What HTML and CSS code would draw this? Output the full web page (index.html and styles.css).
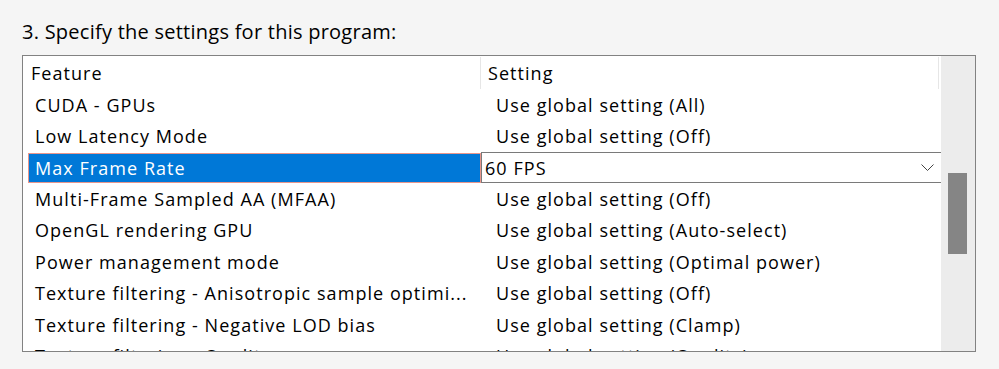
FILE: index.html
```html
<!DOCTYPE html>
<html lang="en">
<head>
  <meta charset="UTF-8">
  <title>Program Settings</title>
  <link rel="stylesheet" href="styles.css">
</head>
<body>

  <div class="page">
    <p class="step">3. Specify the settings for this program:</p>

    <div class="settings">
      <div class="grid">
        <div class="head">
          <span class="col">Feature</span>
          <span class="col col-last">Setting</span>
        </div>

        <div class="row"><span class="feature">CUDA - GPUs</span><span class="setting">Use global setting (All)</span></div>
        <div class="row"><span class="feature">Low Latency Mode</span><span class="setting">Use global setting (Off)</span></div>
        <div class="row selected">
          <span class="feature">Max Frame Rate</span>
          <span class="combo">
            60 FPS
            <svg class="chevron" width="13" height="7" viewBox="0 0 13 7">
              <path d="M0.5 0.5 L6.5 6.5 L12.5 0.5" fill="none" stroke="#444" stroke-width="1"/>
            </svg>
          </span>
        </div>
        <div class="row"><span class="feature">Multi-Frame Sampled AA (MFAA)</span><span class="setting">Use global setting (Off)</span></div>
        <div class="row"><span class="feature">OpenGL rendering GPU</span><span class="setting">Use global setting (Auto-select)</span></div>
        <div class="row"><span class="feature">Power management mode</span><span class="setting">Use global setting (Optimal power)</span></div>
        <div class="row"><span class="feature">Texture filtering - Anisotropic sample optimi...</span><span class="setting">Use global setting (Off)</span></div>
        <div class="row"><span class="feature">Texture filtering - Negative LOD bias</span><span class="setting">Use global setting (Clamp)</span></div>
        <div class="row"><span class="feature">Texture filtering - Quality</span><span class="setting">Use global setting (Quality)</span></div>
      </div>

      <div class="scrollbar">
        <div class="thumb"></div>
      </div>
    </div>
  </div>

</body>
</html>
```

FILE: styles.css
```css
* { box-sizing: border-box; }

body {
  margin: 0;
  background: #f5f5f5;
  font-family: 'Open Sans', 'Noto Sans', sans-serif;
  color: #000;
}

.page {
  padding-left: 22px;
  width: 976px;
}

.step {
  margin: 0;
  padding-top: 20px;
  font-size: 20px;
  letter-spacing: 0.25px;
  line-height: 24px;
  margin-bottom: 11px;
}

.settings {
  display: flex;
  height: 297px;
  border: 1px solid #828282;
  background: #fff;
  overflow: hidden;
}

.grid {
  width: 918px;
  font-size: 18px;
  letter-spacing: 1.05px;
}

.head {
  display: grid;
  grid-template-columns: 458px 1fr;
  height: 33px;
  align-items: stretch;
}

.head .col {
  display: flex;
  align-items: center;
  padding-left: 8px;
  margin-top: 1px;
  border-right: 1px solid #e6e6e6;
}

.head .col-last {
  padding-left: 7px;
  margin-right: 2px;
}

.row {
  display: grid;
  grid-template-columns: 458px 1fr;
  height: 31.43px;
  align-items: center;
  white-space: nowrap;
}

.feature {
  padding-left: 12px;
}

.setting {
  padding-left: 15px;
}

.selected {
  align-items: stretch;
}

.selected .feature {
  display: flex;
  align-items: center;
  margin: 1px 0 0 5px;
  padding-left: 6px;
  background: #0078d7;
  border: 1px solid #e8968c;
  color: #fff;
}

.combo {
  display: flex;
  align-items: center;
  justify-content: space-between;
  padding: 0 7px 0 3px;
  background: #fff;
  border: 1px solid #7a7a7a;
  border-right: none;
}

.chevron {
  display: block;
}

.scrollbar {
  width: 34px;
  background: #ececec;
  padding: 117px 0 0 7px;
}

.thumb {
  width: 19px;
  height: 81px;
  background: #858585;
}
```
